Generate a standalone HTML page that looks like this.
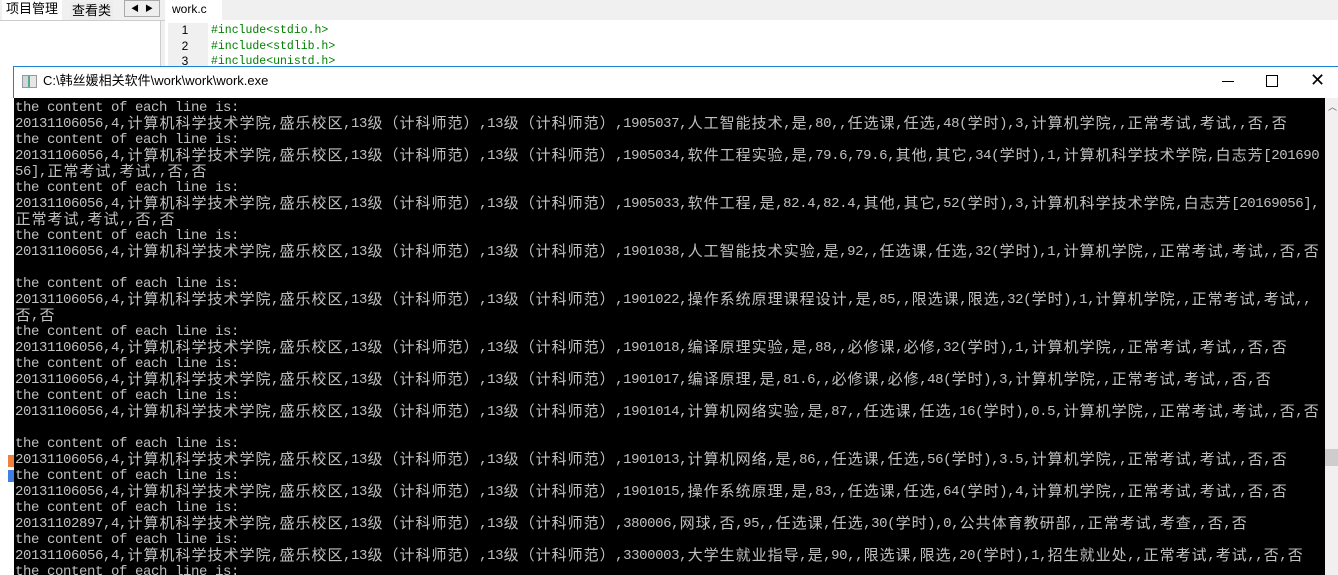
<!DOCTYPE html>
<html><head><meta charset="utf-8"><style>
body{margin:0;width:1338px;height:575px;overflow:hidden;background:#f0f0f0;position:relative;font-family:"Liberation Sans","Noto Sans CJK SC",sans-serif}
.a{position:absolute}
#con{left:14px;top:98px;width:1311px;height:477px;background:#000;color:#c0c0c0;overflow:hidden}
.l{height:16px;line-height:16px;white-space:pre;font-family:"Liberation Mono","Noto Sans CJK SC",monospace;font-size:14px;letter-spacing:-0.4px;padding-left:1px;position:relative;top:2px}
.c{font-family:"Noto Sans CJK SC",sans-serif;font-size:15px;letter-spacing:0;display:inline-block;width:16px;text-align:center;line-height:16px;vertical-align:top;position:relative;top:-1px}
</style></head><body>
<div class="a" style="left:0;top:0;width:160px;height:575px;background:#fff;border-right:1px solid #ccc"></div>
<div class="a" style="left:0;top:0;width:165px;height:20px;background:#f0f0f0;border-bottom:1px solid #ccc"></div>
<div class="a" style="left:2px;top:0;height:20px;background:#fff;font-size:13px;line-height:18px;padding:0 4px">项目管理</div>
<div class="a" style="left:70px;top:2px;height:18px;font-size:13px;line-height:18px;padding:0 2px;background:#ececec">查看类</div>
<div class="a" style="left:124px;top:0;width:34px;height:15px;border:1px solid #aaa;background:#eee;font-size:8px;line-height:15px"><span style="position:absolute;left:6px">◀</span><span style="position:absolute;left:20px">▶</span></div>
<div class="a" style="left:165px;top:0;width:1173px;height:20px;background:#f0f0f0"></div>
<div class="a" style="left:165px;top:0;width:50px;height:20px;background:#fff;font-size:12px;line-height:18px;padding-left:7px">work.c</div>
<div class="a" style="left:165px;top:20px;width:1173px;height:50px;background:#fff"></div>
<div class="a" style="left:168px;top:23px;width:40px;height:47px;background:#f0f0f0;font-size:12px;line-height:15.5px;text-align:center;color:#000;padding-right:6px;box-sizing:border-box">1<br>2<br>3</div>
<div class="a" style="left:211px;top:23px;font-family:'Liberation Mono',monospace;font-size:11.5px;line-height:15.5px;color:#008000">#include&lt;stdio.h&gt;<br>#include&lt;stdlib.h&gt;<br>#include&lt;unistd.h&gt;</div>
<div class="a" style="left:8px;top:455px;width:6px;height:12px;background:#f08040"></div>
<div class="a" style="left:8px;top:470px;width:6px;height:12px;background:#4080e0"></div>
<div class="a" style="left:13px;top:66px;width:1325px;height:32px;background:#fff;border-top:1px solid #1883d7;border-left:1px solid #1883d7;box-sizing:border-box"></div>
<div class="a" style="left:22px;top:75px;width:13px;height:11px;border:1px solid #999;background:linear-gradient(90deg,#cfd6dd 40%,#5a8 40%,#5a8 55%,#e6e6e6 55%)"></div>
<div class="a" style="left:43px;top:73px;font-size:13px;line-height:16px">C:\韩丝媛相关软件\work\work\work.exe</div>
<div class="a" style="left:1222px;top:81px;width:12px;height:1px;background:#000"></div>
<div class="a" style="left:1266px;top:75px;width:10px;height:10px;border:1px solid #000"></div>
<div class="a" style="left:1310px;top:70px;font-size:18px;line-height:20px">✕</div>
<div class="a" style="left:1325px;top:98px;width:13px;height:477px;background:#f0f0f0"></div>
<div class="a" style="left:1328px;top:100px;font-size:9px;color:#666">︿</div>
<div class="a" style="left:1325px;top:449px;width:13px;height:17px;background:#cdcdcd"></div>
<div class="a" id="con">
<div class="l">the content of each line is:</div>
<div class="l">20131106056,4,计算机科学技术学院,盛乐校区,13级（计科师范）,13级（计科师范）,1905037,人工智能技术,是,80,,任选课,任选,48(学时),3,计算机学院,,正常考试,考试,,否,否</div>
<div class="l">the content of each line is:</div>
<div class="l">20131106056,4,计算机科学技术学院,盛乐校区,13级（计科师范）,13级（计科师范）,1905034,软件工程实验,是,79.6,79.6,其他,其它,34(学时),1,计算机科学技术学院,白志芳[201690</div>
<div class="l">56],正常考试,考试,,否,否</div>
<div class="l">the content of each line is:</div>
<div class="l">20131106056,4,计算机科学技术学院,盛乐校区,13级（计科师范）,13级（计科师范）,1905033,软件工程,是,82.4,82.4,其他,其它,52(学时),3,计算机科学技术学院,白志芳[20169056],</div>
<div class="l">正常考试,考试,,否,否</div>
<div class="l">the content of each line is:</div>
<div class="l">20131106056,4,计算机科学技术学院,盛乐校区,13级（计科师范）,13级（计科师范）,1901038,人工智能技术实验,是,92,,任选课,任选,32(学时),1,计算机学院,,正常考试,考试,,否,否</div>
<div class="l"> </div>
<div class="l">the content of each line is:</div>
<div class="l">20131106056,4,计算机科学技术学院,盛乐校区,13级（计科师范）,13级（计科师范）,1901022,操作系统原理课程设计,是,85,,限选课,限选,32(学时),1,计算机学院,,正常考试,考试,,</div>
<div class="l">否,否</div>
<div class="l">the content of each line is:</div>
<div class="l">20131106056,4,计算机科学技术学院,盛乐校区,13级（计科师范）,13级（计科师范）,1901018,编译原理实验,是,88,,必修课,必修,32(学时),1,计算机学院,,正常考试,考试,,否,否</div>
<div class="l">the content of each line is:</div>
<div class="l">20131106056,4,计算机科学技术学院,盛乐校区,13级（计科师范）,13级（计科师范）,1901017,编译原理,是,81.6,,必修课,必修,48(学时),3,计算机学院,,正常考试,考试,,否,否</div>
<div class="l">the content of each line is:</div>
<div class="l">20131106056,4,计算机科学技术学院,盛乐校区,13级（计科师范）,13级（计科师范）,1901014,计算机网络实验,是,87,,任选课,任选,16(学时),0.5,计算机学院,,正常考试,考试,,否,否</div>
<div class="l"> </div>
<div class="l">the content of each line is:</div>
<div class="l">20131106056,4,计算机科学技术学院,盛乐校区,13级（计科师范）,13级（计科师范）,1901013,计算机网络,是,86,,任选课,任选,56(学时),3.5,计算机学院,,正常考试,考试,,否,否</div>
<div class="l">the content of each line is:</div>
<div class="l">20131106056,4,计算机科学技术学院,盛乐校区,13级（计科师范）,13级（计科师范）,1901015,操作系统原理,是,83,,任选课,任选,64(学时),4,计算机学院,,正常考试,考试,,否,否</div>
<div class="l">the content of each line is:</div>
<div class="l">20131102897,4,计算机科学技术学院,盛乐校区,13级（计科师范）,13级（计科师范）,380006,网球,否,95,,任选课,任选,30(学时),0,公共体育教研部,,正常考试,考查,,否,否</div>
<div class="l">the content of each line is:</div>
<div class="l">20131106056,4,计算机科学技术学院,盛乐校区,13级（计科师范）,13级（计科师范）,3300003,大学生就业指导,是,90,,限选课,限选,20(学时),1,招生就业处,,正常考试,考试,,否,否</div>
<div class="l">the content of each line is:</div>
</div>
<script>
document.querySelectorAll('#con .l').forEach(function(d){
 d.innerHTML=d.textContent.replace(/[^\x00-\x7f]/g,function(ch){return '<span class="c">'+ch+'</span>';});
});
</script>
</body></html>
